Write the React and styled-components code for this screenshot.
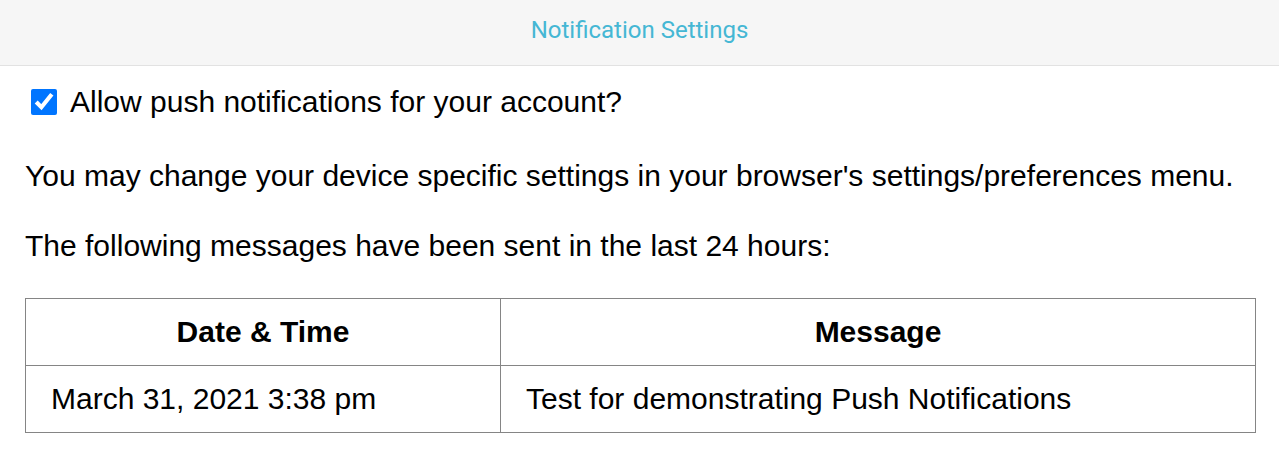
import React, { useState } from "react";
import styled, { createGlobalStyle } from "styled-components";

const GlobalStyle = createGlobalStyle`
  body {
    margin: 0;
    background: #ffffff;
    font-family: "Liberation Sans", Arial, sans-serif;
    color: #000000;
  }
`;

const Header = styled.header`
  height: 66px;
  background: #f6f6f6;
  border-bottom: 1px solid #e2e2e2;
  display: flex;
  justify-content: center;
  padding-top: 14px;
  box-sizing: border-box;
`;

const Title = styled.h1`
  margin: 0;
  font-family: Roboto, "Noto Sans", sans-serif;
  font-weight: 400;
  font-size: 24px;
  line-height: 32px;
  color: #45b7d4;
`;

const Content = styled.main`
  padding: 19px 24px 0 25px;
`;

const CheckRow = styled.label`
  display: flex;
  align-items: center;
  gap: 13px;
  padding-left: 6px;
  font-size: 30px;
  line-height: 34px;
`;

const Checkbox = styled.input`
  width: 26px;
  height: 26px;
  margin: 0;
  accent-color: #0075ff;
`;

const Text = styled.p`
  margin: 0;
  font-size: 30px;
  line-height: 34px;
  margin-top: ${(p) => p.$top}px;
`;

const Table = styled.table`
  margin-top: 35px;
  width: 1231px;
  border-collapse: collapse;
  font-size: 30px;
`;

const Th = styled.th`
  border: 1px solid #858585;
  height: 66px;
  padding: 0 25px;
  text-align: center;
  font-weight: 700;
  width: ${(p) => p.$width};
`;

const Td = styled.td`
  border: 1px solid #858585;
  height: 66px;
  padding: 0 25px;
  text-align: left;
`;

const messages = [
  { date: "March 31, 2021 3:38 pm", text: "Test for demonstrating Push Notifications" },
];

export default function App() {
  const [allowed, setAllowed] = useState(true);

  return (
    <>
      <GlobalStyle />
      <Header>
        <Title>Notification Settings</Title>
      </Header>
      <Content>
        <CheckRow>
          <Checkbox
            type="checkbox"
            checked={allowed}
            onChange={(e) => setAllowed(e.target.checked)}
          />
          Allow push notifications for your account?
        </CheckRow>
        <Text $top={40}>
          You may change your device specific settings in your browser's settings/preferences menu.
        </Text>
        <Text $top={36}>The following messages have been sent in the last 24 hours:</Text>
        <Table>
          <thead>
            <tr>
              <Th $width="424px">Date &amp; Time</Th>
              <Th>Message</Th>
            </tr>
          </thead>
          <tbody>
            {messages.map((m) => (
              <tr key={m.date}>
                <Td>{m.date}</Td>
                <Td>{m.text}</Td>
              </tr>
            ))}
          </tbody>
        </Table>
      </Content>
    </>
  );
}
